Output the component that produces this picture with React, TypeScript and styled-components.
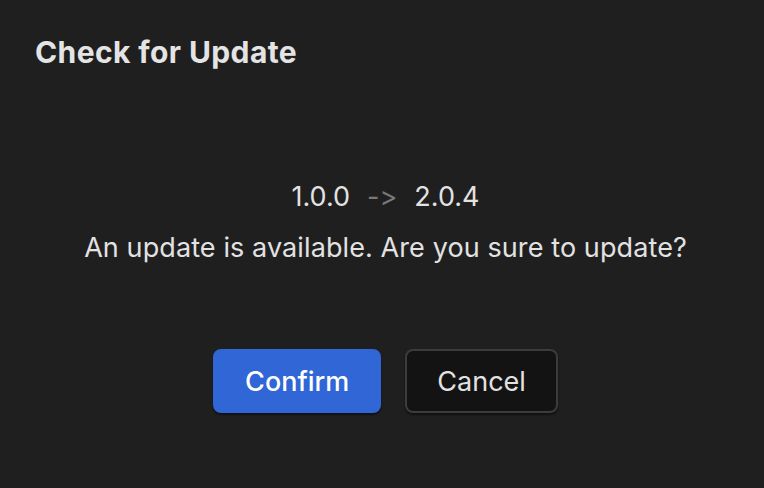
import styled, { createGlobalStyle } from 'styled-components';

const GlobalStyle = createGlobalStyle`
  html, body {
    margin: 0;
    padding: 0;
    background: #1f1f1f;
  }
  * {
    box-sizing: border-box;
  }
`;

const Dialog = styled.div`
  width: 764px;
  height: 488px;
  background: #1f1f1f;
  display: flex;
  flex-direction: column;
  font-family: Inter, 'Noto Sans', sans-serif;
  font-variant-ligatures: none;
  font-feature-settings: 'calt' 0, 'liga' 0;
  color: #e6e6e6;
`;

const Title = styled.h1`
  margin: 0;
  padding: 34px 35px 0;
  font-size: 30px;
  font-weight: 700;
  line-height: 36px;
  letter-spacing: 0.4px;
  color: #e4e4e4;
`;

const Body = styled.div`
  display: flex;
  flex-direction: column;
  align-items: center;
  padding: 111px 0 0 7px;
`;

const Versions = styled.div`
  display: flex;
  align-items: center;
  gap: 17px;
  font-size: 27px;
  line-height: 32px;
  color: #e2e2e2;
`;

const Arrow = styled.span`
  color: #787878;
`;

const Message = styled.p`
  margin: 19px 0 0;
  font-size: 27px;
  line-height: 32px;
  letter-spacing: 0.1px;
  color: #e2e2e2;
`;

const Actions = styled.div`
  display: flex;
  justify-content: center;
  gap: 24px;
  margin-top: 85px;
`;

const Button = styled.button<{ $primary?: boolean }>`
  height: 64px;
  padding: 0 30px;
  border-radius: 8px;
  font-family: inherit;
  font-size: 27px;
  font-weight: ${(p) => (p.$primary ? 500 : 400)};
  cursor: pointer;
  border: 2px solid ${(p) => (p.$primary ? '#3066d6' : '#3c3c3c')};
  background: ${(p) => (p.$primary ? '#3066d6' : '#131313')};
  color: ${(p) => (p.$primary ? '#ffffff' : '#e2e2e2')};
  box-shadow: 0 2px 2px rgba(0, 0, 0, 0.45);
`;

const App = () => {
  return (
    <Dialog>
      <GlobalStyle />
      <Title>Check for Update</Title>
      <Body>
        <Versions>
          <span>1.0.0</span>
          <Arrow>-&gt;</Arrow>
          <span>2.0.4</span>
        </Versions>
        <Message>An update is available. Are you sure to update?</Message>
        <Actions>
          <Button $primary>Confirm</Button>
          <Button>Cancel</Button>
        </Actions>
      </Body>
    </Dialog>
  );
};

export default App;
